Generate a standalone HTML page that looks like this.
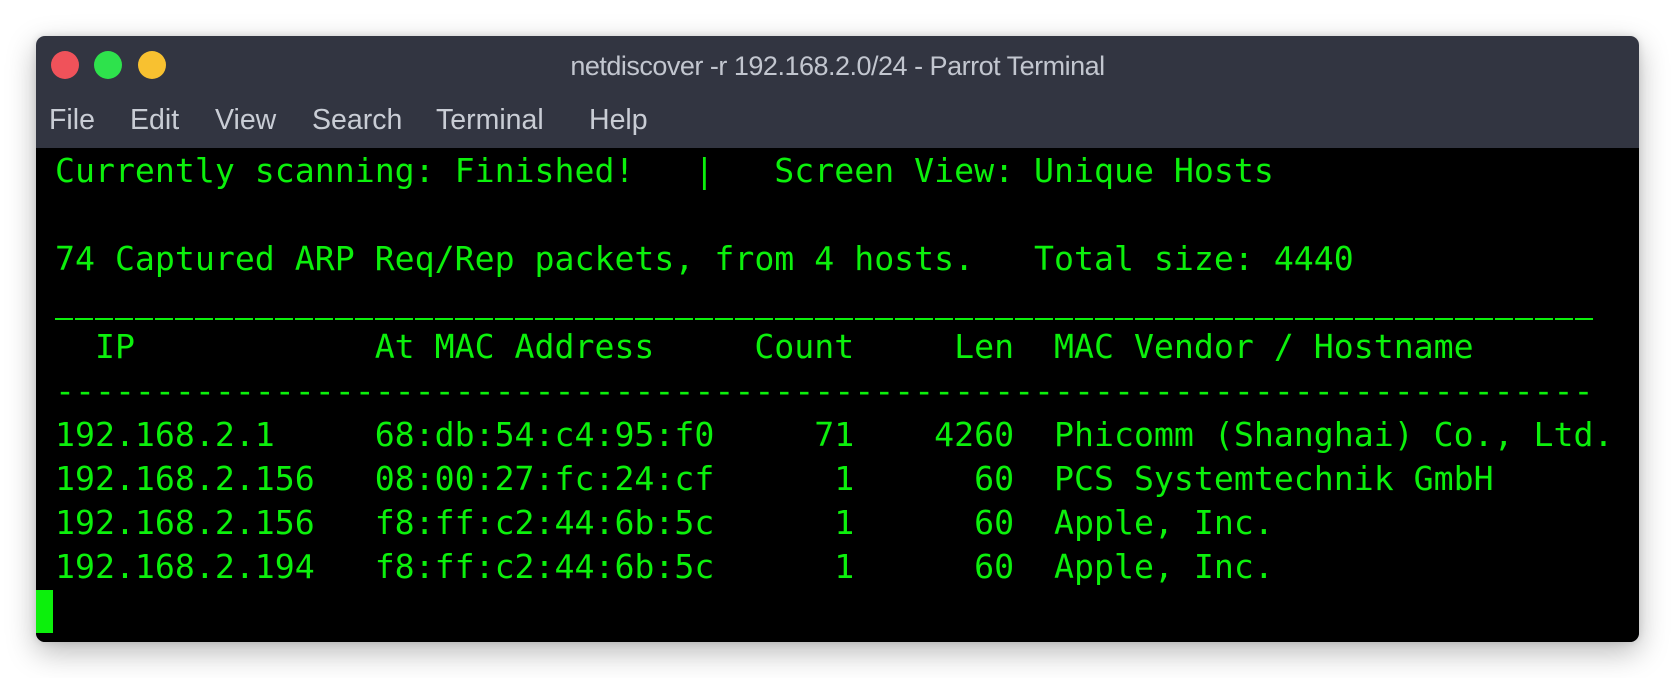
<!DOCTYPE html>
<html><head><meta charset="utf-8"><style>
html,body{margin:0;padding:0;width:1676px;height:678px;background:#fff;overflow:hidden}
.win{position:absolute;left:36px;top:36px;width:1603px;height:606px;border-radius:9px;background:#323541;box-shadow:0 10px 30px rgba(0,0,0,0.28),0 0 8px rgba(0,0,0,0.12);overflow:hidden}
.dot{position:absolute;top:15px;width:28px;height:28px;border-radius:50%}
.title{position:absolute;left:0;right:0;top:15px;text-align:center;font-family:"Liberation Sans",sans-serif;font-size:27px;color:#c2c6cf;letter-spacing:-0.5px}
.menu{position:absolute;top:68px;font-family:"Liberation Sans",sans-serif;font-size:28.5px;color:#c9cdd5}
.term{position:absolute;left:0;top:112px;width:1603px;height:494px;background:#000}
pre{margin:0;position:absolute;left:19px;top:1px;font-family:"DejaVu Sans Mono","Liberation Mono",monospace;font-size:33.2px;line-height:44px;color:#0cf00c}
.ul{position:absolute;left:19px;top:170px;width:1540px;height:2px;background:repeating-linear-gradient(90deg,#0cf00c 0 18px,transparent 18px 20px)}
.cur{position:absolute;left:0;top:442px;width:17px;height:43px;background:#0cf00c}
</style></head><body>
<div class="win">
<div class="dot" style="left:15px;background:#f0525a"></div>
<div class="dot" style="left:58px;background:#2ee24c"></div>
<div class="dot" style="left:102px;background:#f8c130"></div>
<div class="title">netdiscover -r 192.168.2.0/24 - Parrot Terminal</div>
<div class="menu" style="left:13px">File</div>
<div class="menu" style="left:94px">Edit</div>
<div class="menu" style="left:179px">View</div>
<div class="menu" style="left:276px">Search</div>
<div class="menu" style="left:400px">Terminal</div>
<div class="menu" style="left:553px">Help</div>
<div class="term">
<pre>Currently scanning: Finished!   |   Screen View: Unique Hosts

74 Captured ARP Req/Rep packets, from 4 hosts.   Total size: 4440

  IP            At MAC Address     Count     Len  MAC Vendor / Hostname
-----------------------------------------------------------------------------
192.168.2.1     68:db:54:c4:95:f0     71    4260  Phicomm (Shanghai) Co., Ltd.
192.168.2.156   08:00:27:fc:24:cf      1      60  PCS Systemtechnik GmbH
192.168.2.156   f8:ff:c2:44:6b:5c      1      60  Apple, Inc.
192.168.2.194   f8:ff:c2:44:6b:5c      1      60  Apple, Inc.</pre>
<div class="ul"></div>
<div class="cur"></div>
</div>
</div>
</body></html>
